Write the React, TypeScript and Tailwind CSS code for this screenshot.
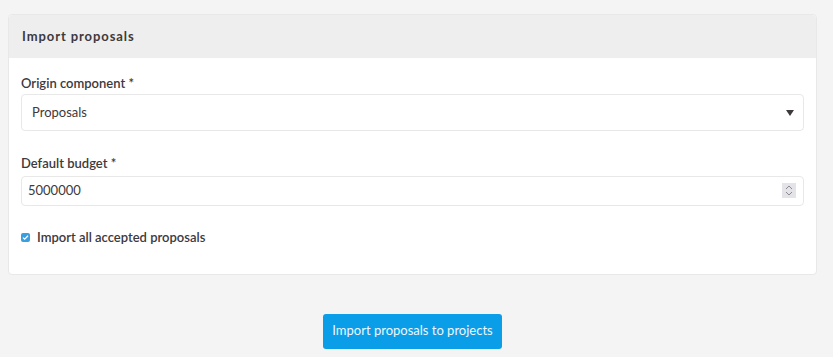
export default function App() {
  return (
    <div className="min-h-screen bg-[#f4f4f4] px-2 pt-[14px] text-[#3d393c]" style={{ fontFamily: 'Lato, "Noto Sans", sans-serif' }}>
      <div className="w-[809px]">
        <div className="rounded border border-[#e8e8e8] bg-white">
          <div className="flex h-[43px] items-center rounded-t bg-[#eeeeee] px-[13px]">
            <h2 className="text-[13px] font-bold tracking-[0.07em]">Import proposals</h2>
          </div>
          <div className="px-[12px] pt-[16px] pb-[26px]">
            <label className="block text-[13px] font-semibold leading-[18px]">Origin component *</label>
            <div className="relative mt-[2px] flex h-[37px] items-center rounded border border-[#e8e8e8] px-[10px] text-[13px]">
              Proposals
              <span className="absolute right-[9px] top-[15px] h-0 w-0 border-x-[4px] border-t-[6px] border-x-transparent border-t-[#3d393c]" />
            </div>
            <label className="mt-[23px] block text-[13px] font-semibold leading-[18px]">Default budget *</label>
            <div className="relative mt-[4px] flex h-[30px] items-center rounded border border-[#e8e8e8] px-[6px] text-[13px]">
              5000000
              <span className="absolute right-[7px] top-[6px] flex h-[15px] w-[14px] flex-col items-center justify-center bg-[#e4e4e8]">
                <svg width="8" height="11" viewBox="0 0 8 11" fill="none" stroke="#8a8a90" strokeWidth="1">
                  <path d="M1 4l3-3 3 3M1 7l3 3 3-3" />
                </svg>
              </span>
            </div>
            <label className="mt-[22px] flex items-center gap-[7px] text-[13px] font-semibold">
              <span className="flex h-[9px] w-[9px] items-center justify-center rounded-[2px] bg-[#3a9fe0]">
                <svg width="7" height="7" viewBox="0 0 7 7" fill="none" stroke="white" strokeWidth="1.3">
                  <path d="M1 3.6l1.7 1.6L6 1.8" />
                </svg>
              </span>
              Import all accepted proposals
            </label>
          </div>
        </div>
        <div className="mt-[39px] flex justify-center">
          <button className="h-[35px] w-[179px] rounded-[3px] bg-[#0a9de8] text-[13px] text-[#eef6fb]">Import proposals to projects</button>
        </div>
      </div>
    </div>
  )
}
